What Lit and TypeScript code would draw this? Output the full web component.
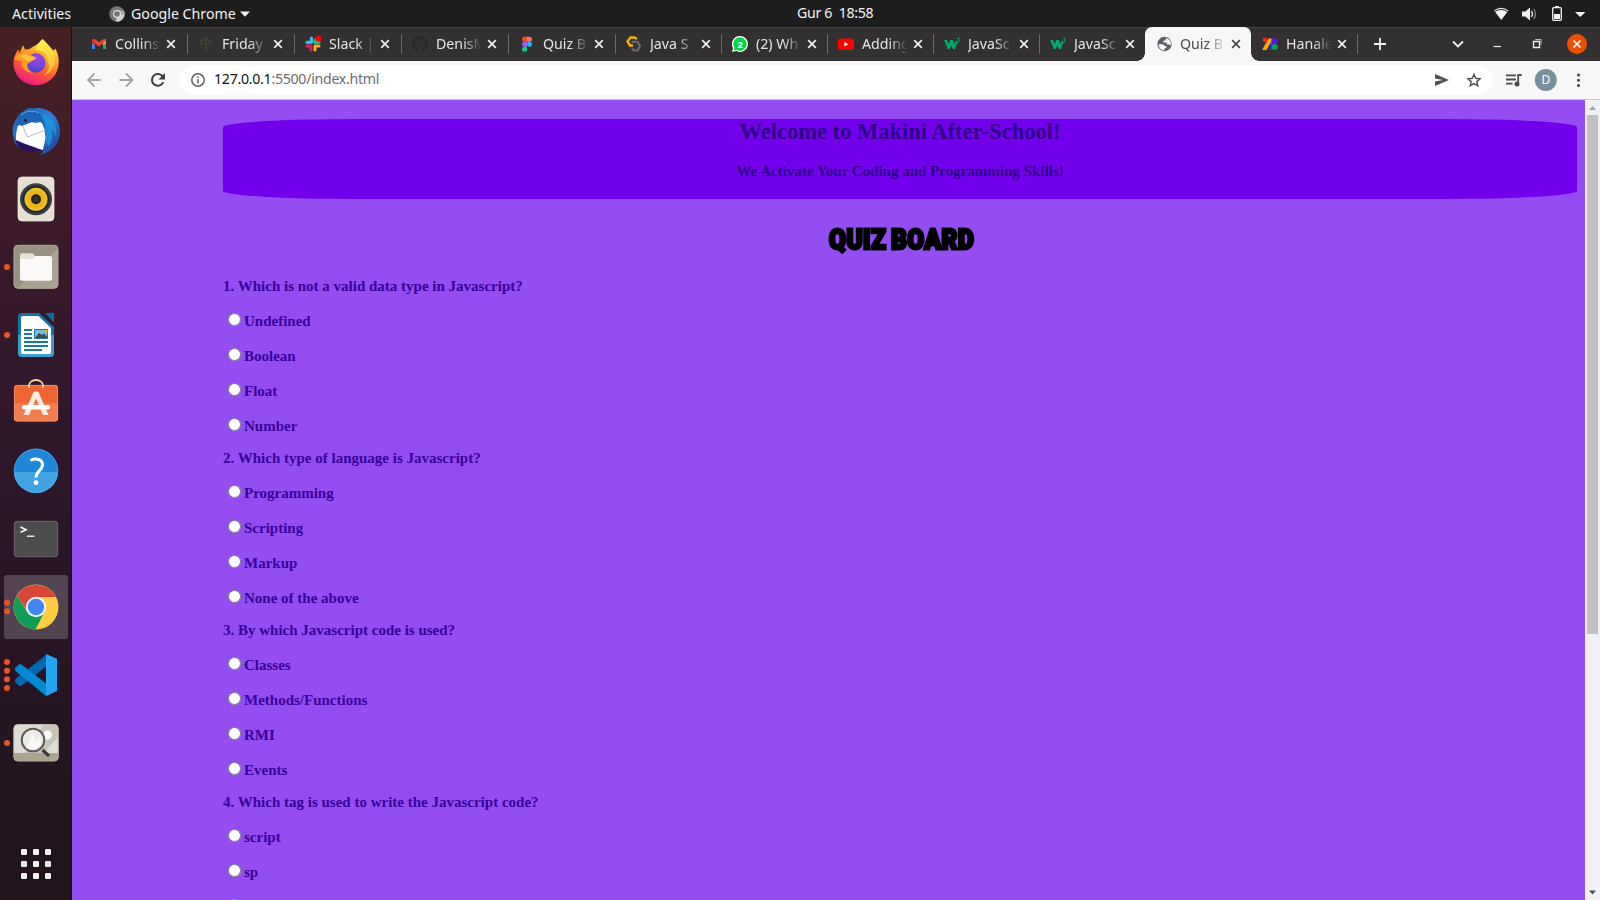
import { LitElement, html, svg, css, nothing } from "lit";
import { customElement, property } from "lit/decorators.js";

const closeGlyph = html`<svg class="x" viewBox="0 0 10 10"><path d="M1.2 1.2 8.8 8.8M8.8 1.2 1.2 8.8" /></svg>`;

/* Launcher icons, each drawn in a 72 x 68 slot centred on 36,34 */
const launcher = [
  {
    dots: 0,
    art: svg`
      <defs>
        <linearGradient id="fx" x1="0.75" y1="0" x2="0.3" y2="1"><stop offset="0" stop-color="#fff44f"/><stop offset=".35" stop-color="#ffa52a"/><stop offset=".65" stop-color="#ff5634"/><stop offset="1" stop-color="#e9168c"/></linearGradient>
        <radialGradient id="fp" cx=".6" cy=".25" r=".8"><stop offset="0" stop-color="#a13ff0"/><stop offset=".6" stop-color="#6a4bdc"/><stop offset="1" stop-color="#4a3bb0"/></radialGradient>
        <linearGradient id="fy" x1="0" y1="0" x2="0" y2="1"><stop offset="0" stop-color="#fff44f"/><stop offset="1" stop-color="#ffb02e"/></linearGradient>
      </defs>
      <path fill="url(#fx)" d="M42.500 11C47 15 48.500 18 49.500 22.500L52 20.500L53 23L55.500 20.500C58 26 59 30 58.700 35C58 48 48 57.200 36 57.200C23.500 57.200 13.500 47.500 13.500 35C13.500 30 15 25.500 18.500 21.500L19.500 25L23 17.300L25 21.500L29.500 21C33 18.500 36 17 37 16.500C39 15.500 41 13.500 42.500 11Z"/>
      <path fill="url(#fy)" d="M42.500 11C37 16 35.500 19 36 22.500C43 22 48 27 47.500 33C51 38 48 45 43 48C50 46 55 39 55 31C54.500 21 48 17 42.500 11Z"/>
      <circle cx="35.800" cy="35" r="9.700" fill="url(#fp)"/>
      <path fill="#ff9a26" d="M14 31C17 25 24 22.500 29 26L36 29.500C36 33 29 33 27.500 36.500C27 41 30 44 33 44.800C25 45 20 39 22 33C19 32 16 32 14 31Z"/>
      <path fill="#ffc23a" d="M20 28C25 24.500 28 27 31 29L36 29.500C34 32 30 32 28 34C25 31 23 30 20 28Z"/>`,
  },
  {
    dots: 0,
    art: svg`
      <defs><linearGradient id="tb" x1="0" y1="0" x2="1" y2="1"><stop offset="0" stop-color="#1b5fb5"/><stop offset=".5" stop-color="#2f7fd6"/><stop offset="1" stop-color="#173a8c"/></linearGradient></defs>
      <path fill="url(#tb)" d="M12.500 36C12 28 17 20 25 14L29 12L33 12.500C48 10 59 20 60 34C60.500 46 53 56 40 59C42 57 43 56 43 55C35 57 20 56 14.500 46Z"/>
      <path fill="#2a1160" d="M15 44C18 54 27 58 43 55L44 50Z"/>
      <path fill="#fff" d="M19.500 23L16 38L16 44L24 47.500C32 50 38 53 43 54L45.500 42L44.500 34L42 26L35 27Z"/>
      <path fill="none" stroke="#c2c4c8" stroke-width="1.100" d="M20 24L27.500 41L44 34.500"/>
      <path fill="#1e62b6" d="M17 22C20 16 26 13 33 14C42 16 46 22 47 30L44.500 33C44 28 40 24 35 25C31 26 28 28 24.500 29C21 31 20 28 17 30Z"/>
      <path fill="#1a9be0" opacity=".75" d="M40 18C51 19 58 28 56 41C55 36 53 34 52 32C53 41 52 46 48 51L47 46L45 50C47 39 47 28 40 18Z"/>
      <circle cx="25.500" cy="24.500" r="1.400" fill="#222"/>
      <path fill="none" stroke="#56aef0" stroke-width="1" d="M21 19C27 13.500 35 15 39 17"/>`,
  },
  {
    dots: 0,
    art: svg`
      <rect x="18" y="13" width="36" height="44" rx="4" fill="#e5dfd4" stroke="#f8f4ed" stroke-width=".7"/>
      <circle cx="36" cy="35.300" r="16" fill="#3a3d42"/><circle cx="36" cy="35.300" r="13.500" fill="#24272c"/>
      <circle cx="36" cy="35.300" r="11.500" fill="#f1c024"/><circle cx="36" cy="35.300" r="9.300" fill="#e9b516"/>
      <circle cx="36" cy="35.300" r="5" fill="#202226"/><circle cx="36" cy="35.300" r="2.500" fill="#33363a"/>`,
  },
  {
    dots: 1,
    art: svg`
      <rect x="14" y="13.300" width="44" height="43" rx="4" fill="#989080" stroke="#b5ad9f"/>
      <path d="M58 16V52a4 4 0 0 1-4 4H18Z" fill="#aaa292"/>
      <path d="M20 23.500a2.300 2.300 0 0 1 2.300-2.300h10l3 3H50v8H20Z" fill="#e6e1d6"/>
      <path d="M20 27h12.500l3-3H49.700a2.300 2.300 0 0 1 2.300 2.300V46.500a2.300 2.300 0 0 1-2.300 2.300H22.300a2.300 2.300 0 0 1-2.300-2.300Z" fill="#faf9f7"/>`,
  },
  {
    dots: 1,
    art: svg`
      <path d="M22 13H39L54 27V53a4 4 0 0 1-4 4H22a4 4 0 0 1-4-4V17a4 4 0 0 1 4-4Z" fill="#1373a8"/>
      <path d="M18 35H54V53a4 4 0 0 1-4 4H22a4 4 0 0 1-4-4Z" fill="#3d9dcd"/>
      <path d="M45 13h9v9.500Z" fill="#0e6da0"/>
      <path d="M23 16H38.500L51 28V52a2 2 0 0 1-2 2H23a2 2 0 0 1-2-2V18a2 2 0 0 1 2-2Z" fill="#fff"/>
      <path stroke="#1878ae" stroke-width="2" d="M24 30h8M24 34h8M24 38h8M24 42h24M24 46h24M24 50h18"/>
      <path d="M34.500 29.500h13v9h-13Z" fill="#74bce3" stroke="#1878ae"/><path d="M35 38l4-5 3 2 2-1.500 4 4.500Z" fill="#494949"/><path d="M44 30h3.300V33.200Z" fill="#f4bb20"/>`,
  },
  {
    dots: 0,
    art: svg`
      <rect x="14" y="17" width="44" height="36.300" rx="3" fill="#f16330"/>
      <path d="M14 35H58V50.300a3 3 0 0 1-3 3H17a3 3 0 0 1-3-3Z" fill="#f27e50"/>
      <rect x="14.400" y="17.400" width="43.200" height="35.600" rx="3" fill="none" stroke="#ff9568" stroke-width=".8"/>
      <path d="M29 20v-2.500a7 5.500 0 0 1 14 0v2.500" fill="none" stroke="#f2d6a4" stroke-width="1.800"/>
      <path d="M33.800 23.500h4.400L48.500 47h-5.500L36 30.500 29 47h-5.500Z" fill="#f8eee6"/>
      <rect x="22" y="37" width="28" height="4.500" rx="2.200" fill="#fff"/>`,
  },
  {
    dots: 0,
    art: svg`
      <circle cx="36" cy="34.700" r="22" fill="#1f87d8"/><path d="M14 36a22 21 0 0 0 44 0Z" fill="#42a3e3"/>
      <circle cx="36" cy="34.700" r="21.700" fill="none" stroke="#4da9e8" stroke-width=".8"/>
      <path d="M30.500 24.500C33.500 22.300 42.300 22 42.500 28.500C42.700 34 36 35 36 41.500" fill="none" stroke="#fff" stroke-width="3"/>
      <circle cx="36" cy="46.700" r="2.400" fill="#fff"/>`,
  },
  {
    dots: 0,
    art: svg`
      <rect x="14.300" y="17.300" width="43.400" height="35.400" rx="3" fill="#4c4c4c" stroke="#757575" stroke-width=".8"/>
      <path d="M20.500 23l5.500 2.700-5.500 2.700" fill="none" stroke="#fff" stroke-width="1.600"/><path d="M27 32.200h7.500" stroke="#fff" stroke-width="1.300"/>`,
  },
  {
    dots: 2,
    active: true,
    art: svg`
      <circle cx="36" cy="35" r="22.500" fill="#ffcd40"/>
      <path d="M17 23.500A22.500 22.500 0 0 0 35.500 57.500L45 39L36 45L27 39.500Z" fill="#0f9d58"/>
      <path d="M17 23.500A22.500 22.500 0 0 1 56 25H36L26 37Z" fill="#db4437"/>
      <circle cx="36" cy="35" r="10.200" fill="#f1f1f1"/><circle cx="36" cy="35" r="8.200" fill="#4285f4"/>`,
  },
  {
    dots: 4,
    art: svg`
      <path d="M15.300 42.300L19 45.700Q20.200 46.500 21.500 45.700L46 26.500V15L15.500 39Q14.300 40.500 15.300 42.300Z" fill="#0069b0"/>
      <path d="M15.300 27.800L19 24.500Q20.200 23.600 21.500 24.500L46 43.500V56L15.500 31Q14.300 29.500 15.300 27.800Z" fill="#0088d4"/>
      <path d="M46 14L57 18.800V51L46 56Z" fill="#24a5f2"/>`,
  },
  {
    dots: 1,
    art: svg`
      <rect x="13.800" y="16.500" width="44.500" height="36.500" rx="4" fill="#deddd3" stroke="#bdb9ac"/>
      <path d="M43 17H54a4 4 0 0 1 4 4v8L44 45H25Z" fill="#c9c4b8"/>
      <path d="M14 45H58v4a4 4 0 0 1-4 4H18a4 4 0 0 1-4-4Z" fill="#aba491"/>
      <circle cx="47.500" cy="27" r="4.500" fill="#faf9f7"/>
      <circle cx="33" cy="32" r="11.300" fill="#ebeae5" stroke="#5a5a5a" stroke-width="2"/>
      <path d="M26 40L33 25L36 33L40 29L41 36C38 42 32 43 26 40Z" fill="#fff" opacity=".7"/>
      <path d="M42.500 42l6.500 6" stroke="#3c3c3c" stroke-width="3.200"/>`,
  },
];

/* Tab favicons in a 16 x 16 box */
const w3 = svg`<path d="M0 4h3l1.600 4L6.300 4h2.500l1.700 4L12 4.500l1.500 1.700L10.800 13H9L7.200 9.500 5.500 13H3.700Z" fill="#04aa6d"/><path d="M13 2.300h2.400L14 4.300c1.700 0 1.800 2.500-.8 2" fill="none" stroke="#04aa6d" stroke-width=".9"/>`;
const tabs = [
  { title: "Collins", icon: svg`<path fill="#4285f4" d="M1 4.500V13h3V7Z"/><path fill="#34a853" d="M15 4.500V13h-3V7Z"/><path fill="#fbbc04" d="M12 4l3-.8V7l-3 2Z"/><path fill="#c5221f" d="M1 3.500L4 4v5L1 7Z"/><path fill="#ea4335" d="M1.500 3L4 3.200 8 6.300 12 3.200 14.500 3v2.500L8 10.500 1.500 5.500Z"/>` },
  { title: "Friday", icon: svg`<g stroke="#3e4b31" fill="none"><path d="M8 15V8" stroke-width="1.500"/><path d="M8 10L4 6M8 9l4-4M8 8V3" /></g><g fill="#3e4b31" opacity=".8"><circle cx="4" cy="4.500" r="1.800"/><circle cx="8" cy="3" r="1.900"/><circle cx="12" cy="4.500" r="1.800"/><circle cx="2.800" cy="7.500" r="1.300"/><circle cx="13.200" cy="7.500" r="1.300"/></g>` },
  { title: "Slack |", icon: svg`<g stroke-width="3" stroke-linecap="round"><path d="M6.500 2V6" stroke="#36c5f0"/><path d="M2 6.200h4" stroke="#36c5f0"/><path d="M10 6V4" stroke="#2eb67d"/><path d="M10 6.500h4" stroke="#2eb67d"/><path d="M2 10h4M6 10v4" stroke="#e01e5a"/><path d="M10 10h4M10 11v3" stroke="#ecb22e"/></g><circle cx="13.500" cy="2.500" r="3" fill="#f00"/>` },
  { title: "DenisM", icon: svg`<path fill="#24292f" d="M8 0C3.580 0 0 3.580 0 8c0 3.540 2.290 6.530 5.470 7.590.4.070.55-.17.55-.38v-1.490c-2.010.37-2.530-.49-2.690-.94-.09-.23-.48-.94-.82-1.130-.28-.15-.68-.52-.01-.53.63-.01 1.080.58 1.230.82.72 1.210 1.870.87 2.330.66.07-.52.28-.87.51-1.070-1.780-.2-3.640-.89-3.640-3.950 0-.87.31-1.590.82-2.150-.08-.2-.36-1.020.08-2.120 0 0 .67-.21 2.200.82a7.400 7.400 0 0 1 4 0c1.530-1.040 2.200-.82 2.200-.82.44 1.100.16 1.920.08 2.120.51.56.82 1.270.82 2.150 0 3.070-1.870 3.750-3.650 3.950.29.25.54.73.54 1.480v2.200c0 .21.15.46.55.38A8 8 0 0 0 8 0Z"/>` },
  { title: "Quiz B", icon: svg`<path fill="#f24e1e" d="M8 .8H5.500a2.500 2.500 0 0 0 0 5H8Z"/><path fill="#ff7262" d="M8 .8h2.500a2.500 2.500 0 0 1 0 5H8Z"/><path fill="#a259ff" d="M8 5.800H5.500a2.500 2.500 0 0 0 0 5H8Z"/><circle cx="10.500" cy="8.300" r="2.500" fill="#1abcfe"/><path fill="#0acf83" d="M5.500 10.800H8v2.500a2.500 2.500 0 1 1-2.500-2.500Z"/>` },
  { title: "Java S", icon: svg`<path d="M10 3.500V2.500L8.500 1.500H4.500L1.500 5.500 4 9.500h3" fill="none" stroke="#f3b20b" stroke-width="2.400"/><path d="M5.500 5.800h6L14 9.800 11.500 14.300H7.500L6 12" fill="none" stroke="#66686b" stroke-width="2.200"/>` },
  { title: "(2) Wh", icon: svg`<path d="M8 0a8 8 0 1 1-3.700 15.100L0 16l1-4A8 8 0 0 1 8 0Z" fill="#fff"/><path d="M8 1.300a6.700 6.700 0 1 1-3.400 12.500L1.800 14.500l.7-2.700A6.700 6.700 0 0 1 8 1.300Z" fill="#00d747"/><text x="8" y="11.500" text-anchor="middle" font-size="9.500" font-weight="700" fill="#fff">2</text>` },
  { title: "Adding", icon: svg`<rect y="2.500" width="16" height="11.500" rx="2.500" fill="#f00"/><path d="M6.300 6v4.600L10.300 8.300Z" fill="#fff"/>` },
  { title: "JavaSc", icon: w3 },
  { title: "JavaSc", icon: w3 },
  { title: "Quiz B", active: true, icon: svg`<circle cx="8.500" cy="8" r="7.200" fill="#5a5e66"/><path d="M2.500 8.300h3.800c1.300 0 2 .8 2 1.800h2v2.200H8.500v2H8C4.800 14 2.500 11.600 2.500 8.300ZM9.800 2.300V4.500H7.500v2h3.300v2h2.700l1.300.9C15.800 6 13.500 2.900 9.800 2.300Z" fill="#f7f7f7"/>` },
  { title: "Hanale", icon: svg`<circle cx="3" cy="3.800" r="2.300" fill="#f22"/><path d="M6.500 2.500H11L4.500 14H0Z" fill="#ffa800"/><path d="M8 8L10 3v11H8Z" fill="#14a0d8"/><path d="M9.500 2.300h3a3 3 0 0 1 0 6H9.500Z" fill="#5b16e8"/><path d="M8 8h3.500v6H8Z" fill="#2a35e8"/><circle cx="12.800" cy="11" r="3" fill="#12a150"/>` },
];

const quiz = [
  { q: "1. Which is not a valid data type in Javascript?", a: ["Undefined", "Boolean", "Float", "Number"] },
  { q: "2. Which type of language is Javascript?", a: ["Programming", "Scripting", "Markup", "None of the above"] },
  { q: "3. By which Javascript code is used?", a: ["Classes", "Methods/Functions", "RMI", "Events"] },
  { q: "4. Which tag is used to write the Javascript code?", a: ["script", "sp", "javascript"] },
];

@customElement("top-bar")
class TopBar extends LitElement {
  static styles = css`
    :host { display: grid; grid-template-columns: 1fr auto 1fr; height: 27px; align-items: center; background: #1d1d1d; color: #f2f2f2; font: 14.2px/26px "Noto Sans", sans-serif; white-space: pre; }
    .left { display: flex; align-items: center; padding-left: 12px; }
    .app { display: flex; align-items: center; margin-left: 34px; }
    .app svg { width: 16px; height: 16px; margin-right: 6px; }
    .app .tri { width: 10px; height: 6px; margin: 0 0 0 5px; }
    .act { width: 63px; letter-spacing: 0; }
    .name { width: 104px; letter-spacing: 0; }
    .clock { width: 78px; margin-right: -72px; padding-bottom: 2px; line-height: 24px; letter-spacing: -0.35px; }
    .right { display: flex; justify-content: flex-end; align-items: center; }
    .right svg { width: 110px; height: 26px; }
  `;
  render() {
    return html`
      <div class="left"><span class="act">Activities</span><span class="app"><svg viewBox="0 0 16 16"><circle cx="8" cy="8" r="7.700" fill="#777"/><path d="M8 8h7.700A7.700 7.700 0 0 1 7 15.600Z" fill="#cfcfcf"/><path d="M8 4.500h7A7.700 7.700 0 0 1 15.700 8L8 10Z" fill="#a9a9a9"/><circle cx="8" cy="8" r="4" fill="#ddd"/><circle cx="8" cy="8" r="2.800" fill="#747474"/></svg><span class="name">Google Chrome</span><svg class="tri" viewBox="0 0 10 6"><path d="M0 .5h10L5 5.700Z" fill="#f2f2f2"/></svg></span></div>
      <span class="clock">Gur 6  18:58</span>
      <div class="right"><svg viewBox="1490 0 110 26" fill="#f2f2f2">
        <path d="M1494 9.500Q1501 4 1508.500 9.500L1501.300 19Z"/><path d="M1495 10.600Q1501 6.300 1507.600 10.600" fill="none" stroke="#1d1d1d" stroke-width="1"/>
        <path d="M1522 10.500h3.300L1530 6.500v13l-4.700-4H1522Z"/><path d="M1531.500 10q2 3 0 6" fill="none" stroke="#f2f2f2" stroke-width="1.300"/><path d="M1533.700 8q3.500 5 0 10" fill="none" stroke="#8a8a8a" stroke-width="1.200"/>
        <rect x="1552.700" y="6.700" width="8.600" height="12.600" rx="1" fill="none" stroke="#f2f2f2" stroke-width="1.300"/><rect x="1555" y="5" width="4" height="1.500"/><rect x="1554" y="13" width="6" height="5"/>
        <path d="M1575 11h10.500l-5.200 5Z"/></svg></div>`;
  }
}

@customElement("app-dock")
class AppDock extends LitElement {
  static styles = css`
    :host { display: flex; flex-direction: column; width: 71px; padding-top: 1px; border-right: 1px solid #1b0d14; flex: none; background: linear-gradient(#482023 0, #3d1b29 180px, #32182c 330px, #291527 580px, #23151f 760px, #21141c); }
    svg { display: block; width: 72px; height: 68px; flex: none; margin-right: -1px; }
    .apps { margin-top: auto; height: 70px; }
  `;
  render() {
    return html`${launcher.map((l: any) => {
      const gap = 8.7;
      return html`<svg viewBox="0 0 72 68">
        ${l.active ? svg`<rect x="4" y="3" width="64" height="64" rx="3" fill="#fff" opacity=".2"/>` : nothing}
        ${l.art}
        ${Array.from({ length: l.dots }, (_, i) => svg`<circle cx="7" cy=${35 + (i - (l.dots - 1) / 2) * gap} r="3" fill="#e95420"/>`)}
      </svg>`;
    })}
    <svg class="apps" viewBox="0 0 72 70">${[0, 1, 2].map((r) => [0, 1, 2].map((c) => svg`<rect x=${21 + c * 12} y=${19 + r * 12} width="6" height="6" rx="1.300" fill="#f2f2f2"/>`))}</svg>`;
  }
}

@customElement("browser-tab")
class BrowserTab extends LitElement {
  @property({ attribute: false }) tab: any;
  static styles = css`
    :host { display: block; width: 106px; flex: none; }
    :host(.wide) { width: 107px; }
    .tab { position: relative; display: flex; align-items: center; height: 34px; box-sizing: border-box; padding-left: 11px; color: #e6e4e4; font: 14.2px/32px "Noto Sans", sans-serif; }
    .sep { position: absolute; right: -1px; top: 7px; width: 1px; height: 20px; background: #6a6868; }
    .icon { width: 16px; height: 16px; flex: none; margin-right: 8px; }
    .icon text { font-family: "Noto Sans", sans-serif; }
    .title { width: 44px; overflow: hidden; white-space: nowrap; flex: none; -webkit-mask-image: linear-gradient(90deg, #000 27px, transparent 46px); mask-image: linear-gradient(90deg, #000 27px, transparent 46px); }
    .x { width: 10px; height: 10px; margin-left: 7px; fill: none; stroke: #eee; stroke-width: 1.700; }
    .active { background: #f7f7f7; color: #45474a; border-radius: 7px 7px 0 0; }
    .active .x { stroke: #45474a; }
    .foot { position: absolute; bottom: 0; width: 8px; height: 8px; }
    .fl { left: -8px; background: radial-gradient(circle at 0 0, transparent 7.500px, #f7f7f7 8px); }
    .fr { right: -8px; background: radial-gradient(circle at 100% 0, transparent 7.500px, #f7f7f7 8px); }
  `;
  render() {
    const t = this.tab;
    return html`<div class="tab ${t.active ? "active" : ""}">
      <svg class="icon" viewBox="0 0 16 16">${t.icon}</svg><span class="title">${t.title}</span>${closeGlyph}
      ${t.active ? html`<i class="foot fl"></i><i class="foot fr"></i>` : t.noSep ? nothing : html`<i class="sep"></i>`}
    </div>`;
  }
}

@customElement("quiz-page")
class QuizPage extends LitElement {
  static styles = css`
    :host { display: flex; flex: 1; min-height: 0; background: #944df1; font-family: "Liberation Serif", serif; font-weight: 700; overflow: hidden; }
    .body { flex: 1; padding: 19px 8px 0 151px; color: #380099; }
    .banner { height: 80px; box-sizing: border-box; background: #7300ec; border-radius: 10%; color: #2f0087; text-align: center; overflow: hidden; }
    h1 { margin: 0; font-size: 22.500px; line-height: 25px; }
    h4 { margin: 18px 0 0; font-size: 15px; line-height: 18px; }
    .board { margin: 0; height: 71px; display: flex; align-items: center; justify-content: center; padding: 11px 0 0 4px; box-sizing: border-box; color: #000; font: 900 27px/30px "Roboto", sans-serif; }
    .board span { transform: scaleX(0.9); -webkit-text-stroke: 3px #000; letter-spacing: 0.6px; word-spacing: -2px; white-space: nowrap; }
    .q { height: 32px; line-height: 32px; font-size: 15px; white-space: nowrap; }
    .a { display: flex; height: 35px; line-height: 20px; font-size: 15px; align-items: center; }
    .a span { padding-top: 2px; }
    input { margin: 0 3px 0 5px; width: 13px; height: 13px; flex: none; }
    .scroll { width: 15px; flex: none; background: #f1f1f1; display: flex; flex-direction: column; align-items: center; }
    .scroll svg { width: 15px; height: 15px; flex: none; }
    .thumb { width: 11px; height: 519px; background: #c1c1c1; }
    .end { margin-top: auto; }
  `;
  render() {
    return html`<div class="body">
        <div class="banner"><h1>Welcome to Makini After-School!</h1><h4>We Activate Your Coding and Programming Skills!</h4></div>
        <div class="board"><span>QUIZ BOARD</span></div>
        ${quiz.map((b) => html`<div class="q">${b.q}</div>${b.a.map((o) => html`<label class="a"><input type="radio" /><span>${o}</span></label>`)}`)}
      </div>
      <div class="scroll"><svg viewBox="0 0 15 15"><path d="M4 10h7L7.500 6Z" fill="#a3a3a3"/></svg><div class="thumb"></div><svg class="end" viewBox="0 0 15 15"><path d="M4 5.500h7L7.500 9.500Z" fill="#505050"/></svg></div>`;
  }
}

@customElement("app-root")
class AppRoot extends LitElement {
  static styles = css`
    :host { display: flex; flex-direction: column; width: 1600px; height: 900px; overflow: hidden; }
    .main { display: flex; flex: 1; min-height: 0; }
    .window { display: flex; flex-direction: column; flex: 1; min-width: 0; }
    .strip { display: flex; height: 34px; box-sizing: border-box; background: #333031; box-shadow: inset 0 1px #474444; padding-left: 8px; flex: none; }
    .controls { width: 242px; height: 34px; flex: none; margin-left: auto; }
    .bar { display: flex; align-items: center; height: 39px; box-sizing: border-box; border-bottom: 1px solid #c6c6c8; background: #f7f7f7; flex: none; }
    .nav { width: 108px; height: 38px; flex: none; }
    .omni { display: flex; align-items: center; width: 1312px; height: 30px; border-radius: 15px; background: #fff; font: 14.200px/28px "Noto Sans", sans-serif; color: #6d6d70; }
    .info { width: 14px; height: 14px; margin: 0 9px 0 11px; }
    .url { letter-spacing: -0.3px; padding-bottom: 2px; }
    .host { color: #111; }
    .acts { width: 64px; height: 30px; margin-left: auto; }
    .tools { width: 108px; height: 38px; }
    .tools text { font: 12px "Noto Sans", sans-serif; }
  `;
  render() {
    return html`<top-bar></top-bar>
      <div class="main"><app-dock></app-dock>
        <div class="window">
          <div class="strip">
            ${tabs.map((t, i) => html`<browser-tab class=${i < 5 ? "wide" : ""} .tab=${{ ...t, noSep: i === 9 }}></browser-tab>`)}
            <svg class="controls" viewBox="1358 27 242 34" fill="none" stroke="#f0f0f0" stroke-width="1.800">
              <path d="M1374 44h12M1380 38v12"/><path d="M1453 41.500l5 5 5-5"/><path d="M1493.500 46.500h7.500" stroke-width="1.200"/>
              <path d="M1533.500 41.500h6v6h-6Z" stroke-width="1.300"/><path d="M1535.500 40v-.5h5.500v5.500" stroke-width="1" stroke="#bdbdbd"/>
              <circle cx="1577" cy="44" r="10" fill="#e95000" stroke="none"/><path d="M1573.500 40.500l7 7m0-7l-7 7" stroke="#fff" stroke-width="1.600"/>
            </svg>
          </div>
          <div class="bar">
            <svg class="nav" viewBox="72 61 108 38" fill="none" stroke-width="1.800">
              <path stroke="#a2a2a4" d="M100.500 80H88.500M94.500 73.500L88 80l6.500 6.500"/><path stroke="#a2a2a4" d="M119.500 80h12.500M126 73.500l6.500 6.500-6.500 6.500"/>
              <path stroke="#3c3e42" stroke-width="2" d="M163.300 82A5.900 5.900 0 1 1 162 75.700L163.500 77.500"/><path fill="#3c3e42" stroke="none" d="M165 73v6.500h-6.500Z"/>
            </svg>
            <div class="omni">
              <svg class="info" viewBox="0 0 14 14"><circle cx="7" cy="7" r="6.200" fill="none" stroke="#5f6368" stroke-width="1.500"/><path d="M7 6.200v4.300M7 3.500v1.500" stroke="#5f6368" stroke-width="1.600"/></svg>
              <span class="url"><span class="host">127.0.0.1</span>:5500/index.html</span>
              <svg class="acts" viewBox="1428 65 64 30"><path d="M1435 74l14 6-14 6v-4.600l8-1.400-8-1.400Z" fill="#4d4f52"/><path d="M1474 74.300l1.700 4 4.400.4-3.300 2.900 1 4.300-3.800-2.300-3.800 2.300 1-4.300-3.300-2.900 4.400-.4Z" fill="none" stroke="#4d4f52" stroke-width="1.400"/></svg>
            </div>
            <svg class="tools" viewBox="1492 61 108 38"><g fill="none" stroke="#4a4c50" stroke-width="1.800"><path d="M1506 75.300h10M1506 79.500h10M1506 83.700h6.500"/><path d="M1518.200 84V75h3.500"/></g><circle cx="1517" cy="84" r="2.500" fill="#4a4c50"/>
              <circle cx="1545.800" cy="80" r="11" fill="#78909c"/><text x="1545.800" y="84.300" text-anchor="middle" fill="#fff">D</text>
              <g fill="#444"><circle cx="1578.500" cy="75" r="1.500"/><circle cx="1578.500" cy="80.300" r="1.500"/><circle cx="1578.500" cy="85.500" r="1.500"/></g></svg>
          </div>
          <quiz-page></quiz-page>
        </div>
      </div>`;
  }
}
